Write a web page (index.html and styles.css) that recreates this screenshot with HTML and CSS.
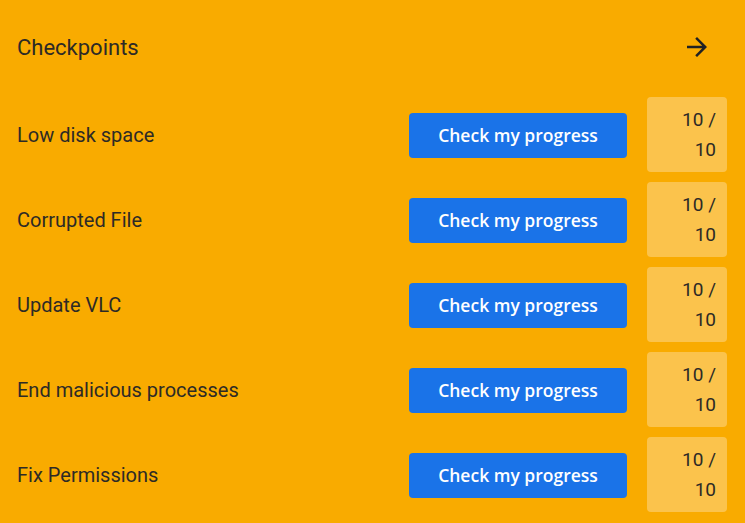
FILE: index.html
```html
<!DOCTYPE html>
<html>
<head>
<meta charset="utf-8">
<link rel="stylesheet" href="styles.css">
</head>
<body>
<div class="panel">
  <div class="header">
    <span class="title">Checkpoints</span>
    <button class="icon-btn" aria-label="Next">
      <svg viewBox="0 0 24 24" width="30" height="30"><path d="M12 4l-1.41 1.41L16.17 11H4v2h12.17l-5.58 5.59L12 20l8-8z" fill="#202124"/></svg>
    </button>
  </div>
  <div class="rows">
    <div class="row"><span class="label">Low disk space</span><button class="check">Check my progress</button><div class="score">10 /<br>10</div></div>
    <div class="row"><span class="label">Corrupted File</span><button class="check">Check my progress</button><div class="score">10 /<br>10</div></div>
    <div class="row"><span class="label">Update VLC</span><button class="check">Check my progress</button><div class="score">10 /<br>10</div></div>
    <div class="row"><span class="label">End malicious processes</span><button class="check">Check my progress</button><div class="score">10 /<br>10</div></div>
    <div class="row"><span class="label">Fix Permissions</span><button class="check">Check my progress</button><div class="score">10 /<br>10</div></div>
  </div>
</div>
</body>
</html>
```
FILE: styles.css
```css
html, body {
  margin: 0;
  padding: 0;
  background: #f9ab00;
  height: 100%;
}
.panel {
  font-family: Roboto, "Liberation Sans", sans-serif;
  color: #2d2a26;
  padding: 0 18px 0 17px;
}
.header {
  height: 94px;
  display: flex;
  align-items: center;
  justify-content: space-between;
  margin-bottom: 3px;
}
.title {
  font-size: 22px;
}
.icon-btn {
  background: none;
  border: 0;
  padding: 0;
  margin-right: 15px;
  width: 30px;
  height: 30px;
  display: flex;
  cursor: pointer;
}
.rows {
  display: flex;
  flex-direction: column;
  gap: 10px;
}
.row {
  display: flex;
  align-items: center;
  height: 75px;
}
.label {
  flex: 1;
  font-size: 20px;
}
.check {
  width: 218px;
  height: 45px;
  margin-top: 1px;
  border: 0;
  border-radius: 4px;
  background: #1a73e8;
  color: #fff;
  font-family: "Open Sans", Roboto, sans-serif;
  font-weight: 600;
  font-size: 17.5px;
  margin-right: 20px;
  cursor: pointer;
}
.score {
  width: 80px;
  height: 75px;
  box-sizing: border-box;
  background: #fbc34c;
  border-radius: 4px;
  text-align: right;
  padding: 8px 11px 0 0;
  font-size: 19px;
  line-height: 30px;
}
```
